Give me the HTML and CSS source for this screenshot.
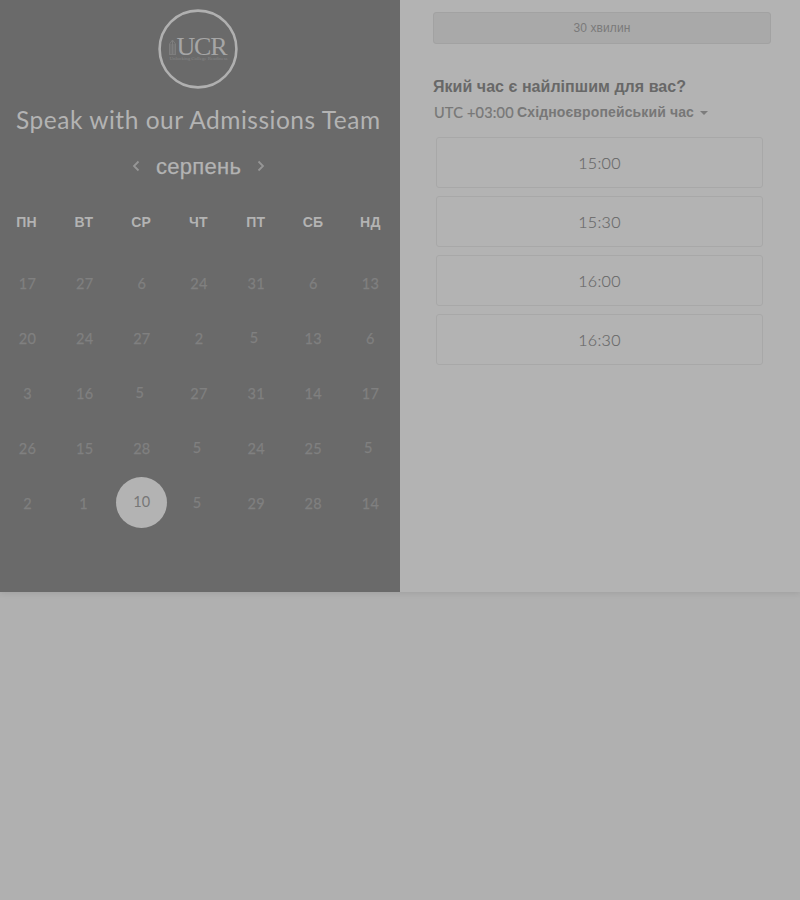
FILE: index.html
```html
<!DOCTYPE html>
<html lang="uk">
<head>
<meta charset="utf-8">
<title>Speak with our Admissions Team</title>
<link rel="stylesheet" href="styles.css">
</head>
<body>
<main class="scheduler">
  <section class="calendar">
    <svg class="logo" width="82" height="82" viewBox="0 0 82 82">
      <circle cx="41" cy="41" r="38.4" fill="none" stroke="#b0b0b0" stroke-width="2.6"/>
      <path d="M12.500 46.500V36l3-4 3 4v10.500M15.500 32v15M12 46.500h7M14 36v11M17 36v11" fill="none" stroke="#7e7e7e" stroke-width="1"/>
      <text><tspan class="logo-name" x="19.5" y="46.500" textLength="51">UCR</tspan><tspan class="logo-tag" x="12.500" y="52" textLength="58">Unlocking College Readiness</tspan></text>
    </svg>
    <h1 class="title">Speak with our Admissions Team</h1>
    <div class="month">
      <svg width="8" height="12" viewBox="0 0 8 12"><path d="M6.500 1.500 2 6l4.500 4.500"/></svg>
      <span class="month-name">серпень</span>
      <svg width="8" height="12" viewBox="0 0 8 12"><path d="M1.500 1.500 6 6l-4.500 4.500"/></svg>
    </div>
    <div class="grid weekdays"><span>ПН</span><span>ВТ</span><span>СР</span><span>ЧТ</span><span>ПТ</span><span>СБ</span><span>НД</span></div>
    <div class="grid days">
      <span>17</span><span>27</span><span>6</span><span>24</span><span>31</span><span>6</span><span>13</span>
      <span>20</span><span>24</span><span>27</span><span>2</span><span class="five">5</span><span>13</span><span>6</span>
      <span>3</span><span>16</span><span class="five">5</span><span>27</span><span>31</span><span>14</span><span>17</span>
      <span>26</span><span>15</span><span>28</span><span class="five">5</span><span>24</span><span>25</span><span class="five">5</span>
      <span>2</span><span class="one">1</span><span class="selected">10</span><span class="five">5</span><span>29</span><span>28</span><span>14</span>
    </div>
  </section>
  <section class="times">
    <div class="duration">30 хвилин</div>
    <h2 class="question">Який час є найліпшим для вас?</h2>
    <div class="zone"><span class="utc">UTC +03:00</span><b>Східноєвропейський час</b><i class="caret"></i></div>
    <div class="slots">
      <div class="slot">15:00</div>
      <div class="slot">15:30</div>
      <div class="slot">16:00</div>
      <div class="slot">16:30</div>
    </div>
  </section>
</main>
</body>
</html>
```
FILE: styles.css
```css
* { box-sizing: border-box; }
body {
  margin: 0;
  height: 900px;
  overflow: hidden;
  background: #b0b0b0;
  font-family: "Liberation Sans", sans-serif;
}
.scheduler {
  display: flex;
  height: 592px;
  background: #b3b3b3;
  box-shadow: 0 1px 6px rgba(0, 0, 0, .1);
}
.calendar {
  width: 400px;
  padding-top: 8px;
  background: #6a6a6a;
  color: #b3b3b3;
}
.logo { display: block; margin-left: 157px; }
.logo-name { font: 26px "Liberation Serif", serif; fill: #a6a6a6; }
.logo-tag { font: 5px "Liberation Serif", serif; fill: #858585; }
.title {
  margin: 12px 0 0 16px;
  font: 400 24.500px/36px Lato, sans-serif;
  letter-spacing: .52px;
  white-space: nowrap;
}
.month {
  display: flex;
  align-items: center;
  height: 30px;
  margin: 13px 0 0 132px;
}
.month path { fill: none; stroke: #969696; stroke-width: 1.8; }
.month-name {
  width: 85px;
  margin: 2px 16px 0;
  font-size: 22px;
  letter-spacing: .3px;
  line-height: 28px;
  white-space: nowrap;
  -webkit-text-stroke: .25px;
}
.grid {
  display: grid;
  grid-template-columns: repeat(7, 1fr);
  margin: 0 1px 0 -1px;
  place-items: center;
  text-align: center;
}
.weekdays {
  height: 20px;
  margin: 31px 1px 0 -2px;
  font-size: 14px;
  font-weight: 700;
  letter-spacing: .3px;
}
.days {
  grid-auto-rows: 54.800px;
  margin-top: 24.500px;
  font: 14.500px Lato, sans-serif;
  letter-spacing: .3px;
  color: #808080;
  -webkit-text-stroke: .25px;
}
.five { padding: 0 4px 2px 0; }
.one { padding-right: 2px; }
.selected {
  width: 51px;
  height: 51px;
  margin-top: -1px;
  border-radius: 50%;
  background: #b3b3b3;
  color: #777;
  line-height: 49px;
  -webkit-text-stroke: 0;
}
.times {
  flex: 1;
  padding: 12px 29px 0 33px;
  color: #686868;
}
.duration {
  height: 32px;
  border: 1px solid #a2a2a2;
  border-radius: 3px;
  background: #a9a9a9;
  color: #7a7a7a;
  font-size: 12px;
  letter-spacing: .1px;
  line-height: 30px;
  text-align: center;
}
.question {
  margin: 33px 0 0;
  font-size: 16px;
  letter-spacing: .04px;
  line-height: 20px;
  white-space: nowrap;
}
.zone {
  display: flex;
  align-items: center;
  height: 20px;
  margin: 5px 0 0 1px;
  color: #777;
  font-size: 14px;
  letter-spacing: .13px;
  white-space: nowrap;
}
.utc {
  width: 83px;
  font: 14.500px Lato, sans-serif;
  letter-spacing: .2px;
  -webkit-text-stroke: .2px;
}
.caret {
  margin: 1px 0 0 6px;
  border: 4px solid transparent;
  border-top-color: #7c7c7c;
  border-bottom: 0;
}
.slots {
  display: grid;
  gap: 8px;
  margin: 15px 8px 0 3px;
}
.slot {
  height: 51px;
  border: 1px solid #a8a8a8;
  border-radius: 3px;
  font: 300 16px/49px Lato, sans-serif;
  letter-spacing: .3px;
  text-align: center;
  -webkit-text-stroke: .15px;
}
```
